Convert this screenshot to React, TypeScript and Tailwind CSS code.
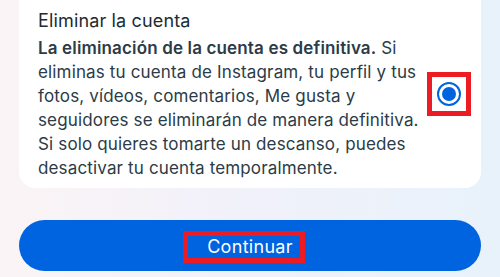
export default function App() {
  return (
    <div
      className="w-[500px] h-[277px] overflow-hidden bg-gradient-to-r from-[#fbf4f6] via-[#f1f1fa] to-[#e8f2fb] px-[19px]"
      style={{ fontFamily: "Inter, 'Noto Sans', sans-serif" }}
    >
      {/* Account deletion option card */}
      <div className="-mt-[20px] flex items-center rounded-2xl bg-white pt-[29px] pb-[8px] pl-[19px] pr-[10px]">
        <div className="flex-1 text-[#2b3b47]">
          <h3 className="text-[18px] leading-[24px] tracking-[0.15px] text-[#1c2b33]">Eliminar la cuenta</h3>
          <p className="mt-[3px] text-[17px] leading-[24px] tracking-[0.15px] whitespace-nowrap">
            <span className="font-semibold">La eliminación de la cuenta es definitiva.</span> Si
            <br />
            eliminas tu cuenta de Instagram, tu perfil y tus
            <br />
            fotos, vídeos, comentarios, Me gusta y
            <br />
            seguidores se eliminarán de manera definitiva.
            <br />
            Si solo quieres tomarte un descanso, puedes
            <br />
            desactivar tu cuenta temporalmente.
          </p>
        </div>
        <div className="-mt-[1px] border-[5px] border-[#ec1c24] p-[5px]">
          <div className="flex h-[24px] w-[24px] items-center justify-center rounded-full border-[2px] border-[#0064e0]">
            <div className="h-[14px] w-[14px] rounded-full bg-[#0064e0]" />
          </div>
        </div>
      </div>

      <button className="mt-[32px] flex h-[51px] w-full items-center justify-center rounded-full bg-[#0064e0]">
        <span className="mt-[3px] mr-[12px] border-[5px] border-[#ec1c24] pl-[19px] pr-[7px] text-[18px] leading-[22px] tracking-[0.3px] text-white">
          Continuar
        </span>
      </button>
    </div>
  )
}
